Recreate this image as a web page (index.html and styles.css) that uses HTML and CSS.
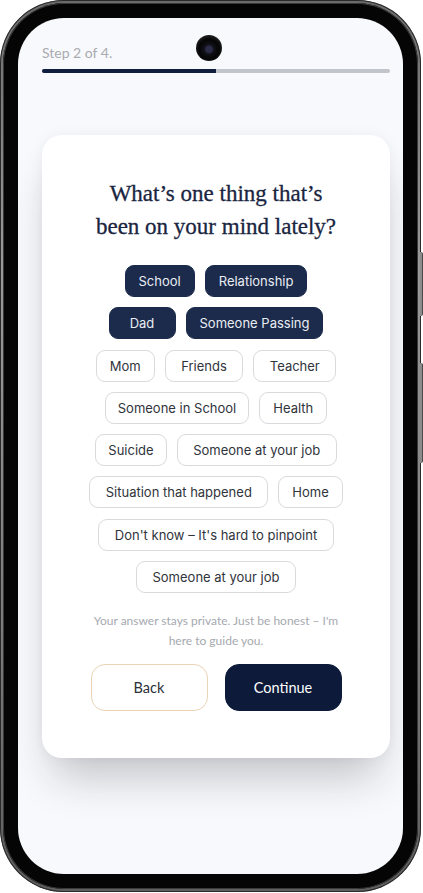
FILE: index.html
```html
<!DOCTYPE html>
<html lang="en">
<head>
<meta charset="utf-8">
<title>Step 2 of 4</title>
<link rel="stylesheet" href="styles.css">
</head>
<body>
<div class="phone">
  <span class="side-btn side-btn-1"></span>
  <span class="side-btn side-btn-2"></span>
  <div class="bezel">
    <div class="screen">
      <span class="camera"></span>
      <div class="step">Step 2 of 4.</div>
      <div class="progress"><div class="progress-fill"></div></div>
      <div class="card">
        <h1 class="title">What’s one thing that’s<br>been on your mind lately?</h1>
        <div class="chips">
          <div class="chip-row">
            <span class="chip selected">School</span>
            <span class="chip selected">Relationship</span>
          </div>
          <div class="chip-row">
            <span class="chip selected">Dad</span>
            <span class="chip selected">Someone Passing</span>
          </div>
          <div class="chip-row">
            <span class="chip">Mom</span>
            <span class="chip chip-roomy">Friends</span>
            <span class="chip chip-roomy">Teacher</span>
          </div>
          <div class="chip-row">
            <span class="chip chip-tight">Someone in School</span>
            <span class="chip">Health</span>
          </div>
          <div class="chip-row">
            <span class="chip chip-tight">Suicide</span>
            <span class="chip chip-roomy">Someone at your job</span>
          </div>
          <div class="chip-row">
            <span class="chip chip-roomy">Situation that happened</span>
            <span class="chip">Home</span>
          </div>
          <div class="chip-row">
            <span class="chip chip-roomy">Don't know – It's hard to pinpoint</span>
          </div>
          <div class="chip-row">
            <span class="chip chip-roomy">Someone at your job</span>
          </div>
        </div>
        <p class="helper">Your answer stays private. Just be honest – I'm<br>here to guide you.</p>
        <div class="actions">
          <button class="btn btn-back">Back</button>
          <button class="btn btn-continue">Continue</button>
        </div>
      </div>
    </div>
  </div>
</div>
</body>
</html>
```

FILE: styles.css
```css
* { box-sizing: border-box; }

body {
  margin: 0;
  background: #ffffff;
  font-family: "Lato", "Liberation Sans", sans-serif;
}

.phone {
  position: relative;
  width: 421px;
  height: 892px;
  border-radius: 64px;
  padding: 3px;
  background: linear-gradient(180deg, #6b6b6b 0%, #9a9a9a 30%, #7c7c7c 70%, #5e5e5e 100%);
  box-shadow: inset 0 0 0 1px #2a2a2a;
}

.side-btn {
  position: absolute;
  right: -2px;
  width: 3px;
  background: #8c8c8c;
  border-radius: 0 2px 2px 0;
  border-right: 1px solid #4a4a4a;
}
.side-btn-1 { top: 252px; height: 64px; }
.side-btn-2 { top: 363px; height: 100px; }

.bezel {
  height: 100%;
  border-radius: 61px;
  background: #050505;
  padding: 15px;
  box-shadow: inset 0 0 0 1px #3a3a3a;
}

.screen {
  position: relative;
  height: 100%;
  border-radius: 46px;
  background: #f8f9fc;
  padding: 26px 13px 0 24px;
  overflow: hidden;
}

.camera {
  position: absolute;
  left: 178px;
  top: 17px;
  width: 26px;
  height: 26px;
  border-radius: 50%;
  background: radial-gradient(circle at 50% 55%, #2c2c48 0 3px, #101018 5px, #050505 10px, #1a1a1a 13px);
}

.step {
  font-size: 14px;
  line-height: 17px;
  color: #a9abb0;
}

.progress {
  margin-top: 8px;
  height: 4px;
  border-radius: 2px;
  background: #c2c4cc;
  overflow: hidden;
}
.progress-fill {
  width: 50%;
  height: 100%;
  background: #0f1d3e;
}

.card {
  margin-top: 62px;
  background: #ffffff;
  border-radius: 20px;
  padding: 42px 0 47px;
  box-shadow: 0 30px 44px -12px rgba(20, 24, 36, 0.24), 0 0 14px rgba(20, 24, 36, 0.05);
  display: flex;
  flex-direction: column;
  align-items: center;
}

.title {
  margin: 0;
  font-family: "Liberation Serif", "DejaVu Serif", serif;
  font-weight: normal;
  font-size: 23px;
  line-height: 33px;
  color: #1a2541;
  text-align: center;
  -webkit-text-stroke: 0.3px #1a2541;
}

.chips {
  margin-top: 22px;
  display: flex;
  flex-direction: column;
  gap: 10.3px;
  width: 100%;
}

.chip-row {
  display: flex;
  justify-content: center;
  gap: 10px;
}

.chip {
  height: 32px;
  padding: 0 13px;
  border: 1px solid #d8dade;
  border-radius: 9px;
  background: #ffffff;
  font-family: "Inter", "Liberation Sans", sans-serif;
  font-size: 13px;
  line-height: 30px;
  color: #30343b;
  white-space: nowrap;
  text-align: center;
}

.chip-roomy { padding: 0 15.5px; }
.chip-tight { padding: 0 12px; }

.chip.selected {
  min-width: 67px;
  padding: 0 13px;
  background: #1c2b4b;
  border-color: #1c2b4b;
  color: #e9edf4;
}

.helper {
  margin: 18px 0 0;
  font-size: 12px;
  line-height: 20px;
  color: #a6a9b0;
  text-align: center;
}

.actions {
  margin-top: 13px;
  display: flex;
  gap: 17px;
}

.btn {
  width: 117px;
  height: 47px;
  border-radius: 14px;
  font-family: "Lato", "Liberation Sans", sans-serif;
  font-size: 14.5px;
  cursor: pointer;
}

.btn-back {
  background: #ffffff;
  border: 1px solid #ebd3b3;
  color: #2d3138;
}

.btn-continue {
  background: #0d1a3a;
  border: 1px solid #0d1a3a;
  color: #ffffff;
}
```
